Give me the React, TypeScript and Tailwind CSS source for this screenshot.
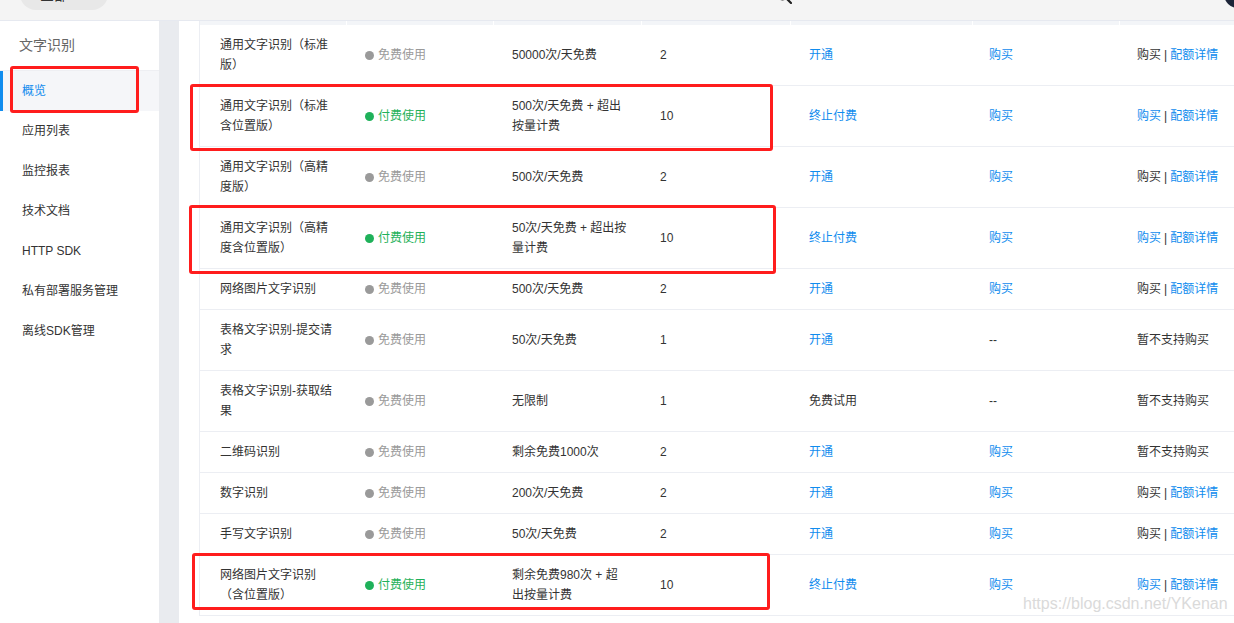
import React from "react";

type Row = {
  name: string[];
  paid: boolean;
  quota: string[];
  count: string;
  action: { text: string; link: boolean };
  buy: string;
  last: "none" | "plain" | "link";
};

const rows: Row[] = [
  { name: ["通用文字识别（标准", "版）"], paid: false, quota: ["50000次/天免费"], count: "2", action: { text: "开通", link: true }, buy: "购买", last: "plain" },
  { name: ["通用文字识别（标准", "含位置版）"], paid: true, quota: ["500次/天免费 + 超出", "按量计费"], count: "10", action: { text: "终止付费", link: true }, buy: "购买", last: "link" },
  { name: ["通用文字识别（高精", "度版）"], paid: false, quota: ["500次/天免费"], count: "2", action: { text: "开通", link: true }, buy: "购买", last: "plain" },
  { name: ["通用文字识别（高精", "度含位置版）"], paid: true, quota: ["50次/天免费 + 超出按", "量计费"], count: "10", action: { text: "终止付费", link: true }, buy: "购买", last: "link" },
  { name: ["网络图片文字识别"], paid: false, quota: ["500次/天免费"], count: "2", action: { text: "开通", link: true }, buy: "购买", last: "plain" },
  { name: ["表格文字识别-提交请", "求"], paid: false, quota: ["50次/天免费"], count: "1", action: { text: "开通", link: true }, buy: "--", last: "none" },
  { name: ["表格文字识别-获取结", "果"], paid: false, quota: ["无限制"], count: "1", action: { text: "免费试用", link: false }, buy: "--", last: "none" },
  { name: ["二维码识别"], paid: false, quota: ["剩余免费1000次"], count: "2", action: { text: "开通", link: true }, buy: "购买", last: "none" },
  { name: ["数字识别"], paid: false, quota: ["200次/天免费"], count: "2", action: { text: "开通", link: true }, buy: "购买", last: "plain" },
  { name: ["手写文字识别"], paid: false, quota: ["50次/天免费"], count: "2", action: { text: "开通", link: true }, buy: "购买", last: "plain" },
  { name: ["网络图片文字识别", "（含位置版）"], paid: true, quota: ["剩余免费980次 + 超", "出按量计费"], count: "10", action: { text: "终止付费", link: true }, buy: "购买", last: "link" },
];

const menu = ["应用列表", "监控报表", "技术文档", "HTTP SDK", "私有部署服务管理", "离线SDK管理"];

function Lines({ lines }: { lines: string[] }) {
  return (
    <div>
      {lines.map((l, i) => (
        <div key={i} className="whitespace-nowrap">
          {l}
        </div>
      ))}
    </div>
  );
}

function Status({ paid }: { paid: boolean }) {
  return (
    <div className={`flex items-center gap-[4px] ${paid ? "text-[#1fb15a]" : "text-[#9a9a9a]"}`}>
      <span className={`w-[9px] h-[9px] rounded-full ${paid ? "bg-[#1fb15a]" : "bg-[#9a9a9a]"}`} />
      <span>{paid ? "付费使用" : "免费使用"}</span>
    </div>
  );
}

function LastCell({ kind }: { kind: Row["last"] }) {
  if (kind === "none") return <span>暂不支持购买</span>;
  return (
    <span className="whitespace-nowrap">
      <span className={kind === "link" ? "text-[#108cee]" : ""}>购买</span>
      <span className="mx-[3px]">|</span>
      <span className="text-[#108cee]">配额详情</span>
    </span>
  );
}

function TableRow({ row }: { row: Row }) {
  return (
    <div className="flex items-center py-[10px] border-b border-[#eceef3] leading-[20px]">
      <div className="w-[147px] shrink-0 pl-[20px]">
        <Lines lines={row.name} />
      </div>
      <div className="w-[147px] shrink-0 pl-[18px]">
        <Status paid={row.paid} />
      </div>
      <div className="w-[148px] shrink-0 pl-[18px]">
        <Lines lines={row.quota} />
      </div>
      <div className="w-[149px] shrink-0 pl-[18px]">{row.count}</div>
      <div className={`w-[182px] shrink-0 pl-[18px] ${row.action.link ? "text-[#108cee]" : ""}`}>
        {row.action.text}
      </div>
      <div className={`w-[147px] shrink-0 pl-[16px] ${row.buy === "购买" ? "text-[#108cee]" : ""}`}>{row.buy}</div>
      <div className="flex-1 pl-[17px]">
        <LastCell kind={row.last} />
      </div>
    </div>
  );
}

export default function App() {
  return (
    <div
      className="relative w-[1234px] h-[623px] overflow-hidden bg-white text-[12px] text-[#333]"
      style={{ fontFamily: '"Liberation Sans", "Noto Sans CJK SC", sans-serif' }}
    >
      {/* top bar, mostly scrolled out of view */}
      <div className="relative h-[21px] bg-[#f4f4f4] border-b border-[#e6e9f0] overflow-hidden">
        <div className="ml-[20px] mt-[-22px] w-[88px] h-[32px] rounded-full bg-[#e8e8e8] pl-[20px] pt-[7px] text-[14px] text-[#333]">
          全部
        </div>
        <svg className="absolute left-[776px] top-[-12px]" width="16" height="16" viewBox="0 0 16 16" fill="none">
          <circle cx="6.5" cy="6.5" r="5" stroke="#222" strokeWidth="1.8" />
          <path d="M10.5 10.5 L15 15" stroke="#222" strokeWidth="2.2" strokeLinecap="round" />
        </svg>
        <div className="absolute left-[1224px] top-[-20px] w-[28px] h-[28px] rounded-full bg-[#1c2438]" />
      </div>

      <div className="flex h-[602px]">
        {/* sidebar */}
        <div className="w-[159px] shrink-0 bg-white">
          <div className="h-[50px] flex items-center pl-[19px] text-[14px] text-[#666] border-b border-[#eeeff3]">
            文字识别
          </div>
          <div className="relative h-[40px] flex items-center pl-[22px] bg-[#f5f6f9] text-[#108cee]">
            <span className="absolute left-0 top-0 bottom-0 w-[3px] bg-[#108cee]" />
            概览
          </div>
          {menu.map((m) => (
            <div key={m} className="h-[40px] flex items-center pl-[22px]">
              {m}
            </div>
          ))}
        </div>

        {/* gutter */}
        <div className="w-[20px] shrink-0 bg-[#e9ebef]" />

        {/* content */}
        <div className="flex-1 bg-white pl-[20px]">
          <div className="border-l border-[#eceef3]">
            <div className="flex h-[4px] bg-[#f3f5f8]">
              <div className="w-[147px] shrink-0 border-r border-white" />
              <div className="w-[147px] shrink-0 border-r border-white" />
              <div className="w-[148px] shrink-0 border-r border-white" />
              <div className="w-[149px] shrink-0 border-r border-white" />
              <div className="w-[182px] shrink-0 border-r border-white" />
              <div className="w-[147px] shrink-0 border-r border-white" />
              <div className="flex-1" />
            </div>
            {rows.map((r, i) => (
              <TableRow key={i} row={r} />
            ))}
          </div>
        </div>
      </div>

      {/* annotation boxes */}
      <div className="absolute left-[10px] top-[66px] w-[129px] h-[47px] border-[3px] border-[#ff1d1d] rounded-[3px]" />
      <div className="absolute left-[190px] top-[84px] w-[583px] h-[67px] border-[3px] border-[#ff1d1d] rounded-[3px]" />
      <div className="absolute left-[189px] top-[205px] w-[587px] h-[69px] border-[3px] border-[#ff1d1d] rounded-[3px]" />
      <div className="absolute left-[192px] top-[553px] w-[578px] h-[57px] border-[3px] border-[#ff1d1d] rounded-[3px]" />

      {/* watermark */}
      <div className="absolute left-[1023px] top-[594px] text-[16px] leading-[20px] text-[#dadada] whitespace-nowrap" style={{ fontFamily: '"Liberation Sans", sans-serif' }}>
        https://blog.csdn.net/YKenan
      </div>
    </div>
  );
}
